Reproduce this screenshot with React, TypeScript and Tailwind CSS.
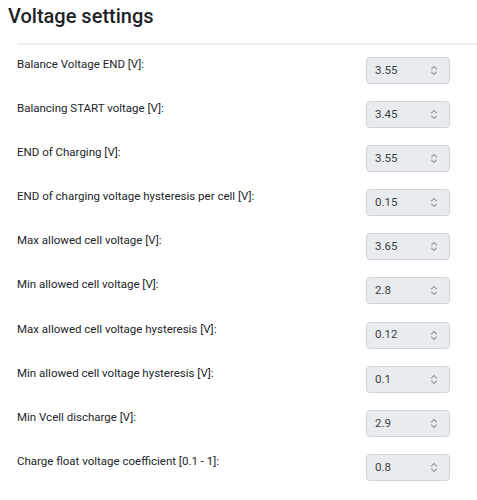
import React from "react";

const rows: [string, string][] = [
  ["Balance Voltage END [V]:", "3.55"],
  ["Balancing START voltage [V]:", "3.45"],
  ["END of Charging [V]:", "3.55"],
  ["END of charging voltage hysteresis per cell [V]:", "0.15"],
  ["Max allowed cell voltage [V]:", "3.65"],
  ["Min allowed cell voltage [V]:", "2.8"],
  ["Max allowed cell voltage hysteresis [V]:", "0.12"],
  ["Min allowed cell voltage hysteresis [V]:", "0.1"],
  ["Min Vcell discharge [V]:", "2.9"],
  ["Charge float voltage coefficient [0.1 - 1]:", "0.8"],
];

function Chevrons() {
  return (
    <svg width="8" height="11" viewBox="0 0 8 11" fill="none" stroke="#9aa1a8" strokeWidth="1.1" strokeLinecap="round" strokeLinejoin="round">
      <path d="M1.5 4 L4 1.5 L6.5 4" />
      <path d="M1.5 7 L4 9.5 L6.5 7" />
    </svg>
  );
}

export default function App() {
  return (
    <div className="w-[477px] h-[500px] overflow-hidden bg-white text-[#212529]" style={{ fontFamily: "Roboto, 'Liberation Sans', sans-serif" }}>
      <h1 className="pl-[8px] pt-[4px] text-[20px] leading-[24px] font-medium text-[#1f2328]">Voltage settings</h1>
      <div className="ml-[17px] mt-[15px] border-t-2 border-[#eceeef]" />
      <div className="pl-[17px] pt-[12px] pr-[27px]">
        {rows.map(([label, value]) => (
          <div key={label} className="flex justify-between items-start h-[44.1px]">
            <div className="text-[11.5px] leading-[20px] -mt-[3px]">{label}</div>
            <div className="w-[84px] h-[27px] rounded-[4px] border border-[#ced4da] bg-[#e9ecef] flex items-center justify-between pl-[8px] pr-[11px]">
              <span className="text-[11.5px] text-[#3c4043]">{value}</span>
              <Chevrons />
            </div>
          </div>
        ))}
      </div>
    </div>
  );
}
